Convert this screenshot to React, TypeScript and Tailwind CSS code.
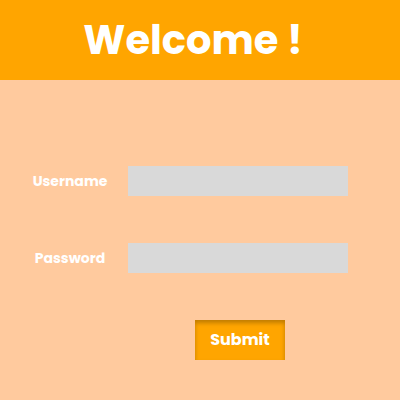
import React, { useState } from 'react';

const App: React.FC = () => {
  const [username, setUsername] = useState('');
  const [password, setPassword] = useState('');

  return (
    <div className="w-[400px] h-[400px] bg-[#FFCA9E] font-['Poppins','Inter','Open_Sans',sans-serif]">
      {/* Header */}
      <div className="h-[80px] bg-[#FFA500] flex items-center justify-center">
        <h1 className="text-[40px] font-bold text-white pr-[14px]">Welcome !</h1>
      </div>

      {/* Form */}
      <form className="pl-[20px] pt-[86px]" onSubmit={e => e.preventDefault()}>
        <div className="grid grid-cols-[100px_220px] gap-x-[8px] gap-y-[47px] items-center">
          <label className="text-center text-[14px] font-bold text-white">Username</label>
          <input
            type="text"
            value={username}
            onChange={e => setUsername(e.target.value)}
            className="h-[30px] bg-[#D9D9D9] outline-none px-2 text-sm"
          />
          <label className="text-center text-[14px] font-bold text-white">Password</label>
          <input
            type="password"
            value={password}
            onChange={e => setPassword(e.target.value)}
            className="h-[30px] bg-[#D9D9D9] outline-none px-2 text-sm"
          />
        </div>
        <div className="pl-[175px] pt-[47px]">
          <button
            type="submit"
            className="w-[90px] h-[40px] bg-[#FFA500] text-white text-[16px] font-bold shadow-[inset_0_3px_4px_rgba(0,0,0,0.25)]"
          >
            Submit
          </button>
        </div>
      </form>
    </div>
  );
};

export default App;
